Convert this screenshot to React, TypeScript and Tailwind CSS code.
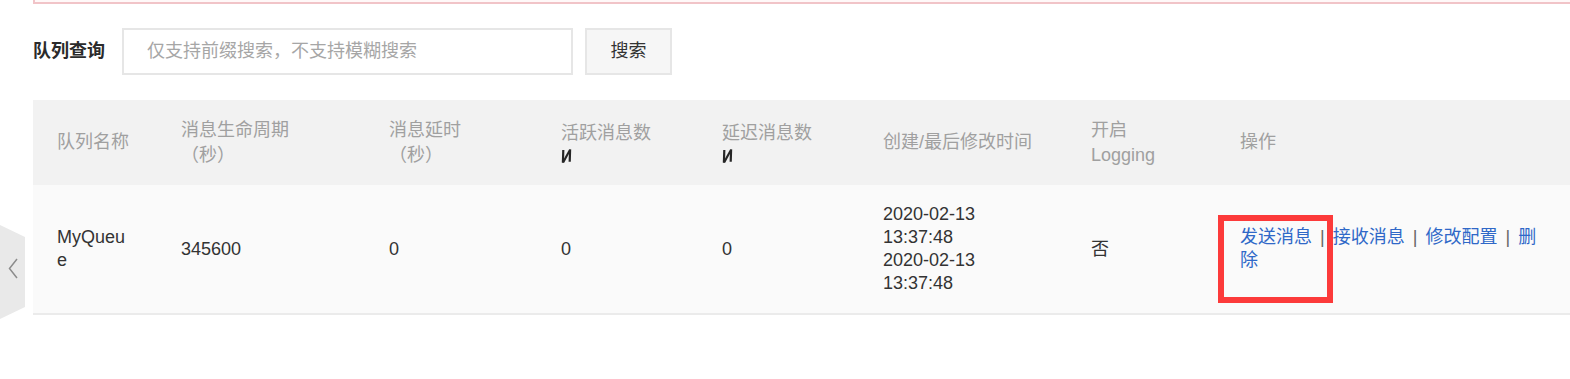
import React from "react";

const font = { fontFamily: '"Liberation Sans", "Noto Sans CJK SC", sans-serif' };

const cols = "grid grid-cols-[124px_208px_172px_161px_161px_208px_149px_1fr]";

function SortIcon() {
    return (
        <svg width="11" height="16" viewBox="0 0 11 16" className="mt-[2px]">
            <path d="M1.2 2 L3.4 2 L3 14.4 L0.8 14.4 Z" fill="#262626" />
            <path d="M0.8 14.4 L8 1.4 L10.2 1.8 L3.2 14.8 Z" fill="#262626" />
            <path d="M8 1.4 L10.2 1.4 L9.8 13.8 L7.6 13.8 Z" fill="#262626" />
        </svg>
    );
}

function HeaderCell({ children, className = "" }: { children: React.ReactNode; className?: string }) {
    return <div className={`pl-[24px] pr-[12px] text-[18px] leading-[25px] text-[#a0a0a0] ${className}`}>{children}</div>;
}

function Cell({ children, className = "" }: { children: React.ReactNode; className?: string }) {
    return <div className={`pl-[24px] text-[18px] leading-[23px] text-[#333] ${className}`}>{children}</div>;
}

function Link({ children }: { children: React.ReactNode }) {
    return <span className="text-[#2f68c8]">{children}</span>;
}

function Sep() {
    return <span className="mx-[3px] text-[#666]">|</span>;
}

export default function App() {
    return (
        <div className="relative w-[1570px] h-[379px] overflow-hidden bg-white" style={font}>
            {/* alert box edge, cut off at the top */}
            <div className="ml-[33px] h-[4px] border-l-2 border-b-2 border-[#f1c4c8] bg-[#fff8f8]" />

            {/* search */}
            <div className="mt-[24px] flex items-center pl-[33px]">
                <span className="w-[89px] text-[18px] font-bold text-[#2b2b2b]">队列查询</span>
                <div className="flex h-[47px] w-[451px] items-center border-2 border-[#e6e6e6] pl-[23px] text-[18px] text-[#a6a6a6]">
                    仅支持前缀搜索，不支持模糊搜索
                </div>
                <button className="ml-[12px] h-[47px] w-[87px] border-2 border-[#e6e6e6] bg-[#f6f6f6] text-[18px] text-[#333]">
                    搜索
                </button>
            </div>

            {/* table */}
            <div className="mt-[25px] ml-[33px]">
                <div className={`${cols} h-[85px] items-center bg-[#f2f2f2]`}>
                    <HeaderCell>队列名称</HeaderCell>
                    <HeaderCell>
                        <div>消息生命周期</div>
                        <div>（秒）</div>
                    </HeaderCell>
                    <HeaderCell>
                        <div>消息延时</div>
                        <div>（秒）</div>
                    </HeaderCell>
                    <HeaderCell>
                        <div>活跃消息数</div>
                        <SortIcon />
                    </HeaderCell>
                    <HeaderCell>
                        <div>延迟消息数</div>
                        <SortIcon />
                    </HeaderCell>
                    <HeaderCell>创建/最后修改时间</HeaderCell>
                    <HeaderCell>
                        <div>开启</div>
                        <div>Logging</div>
                    </HeaderCell>
                    <HeaderCell>操作</HeaderCell>
                </div>

                <div className={`${cols} items-center border-b-2 border-[#ebebeb] bg-[#fafafa] py-[18px]`}>
                    <Cell className="pr-[28px] break-all">MyQueue</Cell>
                    <Cell>345600</Cell>
                    <Cell>0</Cell>
                    <Cell>0</Cell>
                    <Cell>0</Cell>
                    <Cell>
                        <div>2020-02-13</div>
                        <div>13:37:48</div>
                        <div>2020-02-13</div>
                        <div>13:37:48</div>
                    </Cell>
                    <Cell>否</Cell>
                    <Cell className="pr-[30px]">
                        <Link>发送消息</Link> <Sep /> <Link>接收消息</Link> <Sep /> <Link>修改配置</Link> <Sep /> <Link>删除</Link>
                    </Cell>
                </div>
            </div>

            {/* side collapse tab */}
            <svg className="absolute left-0 top-[225px]" width="26" height="94" viewBox="0 0 26 94">
                <path d="M0 0 L25 12 L25 82 L0 94 Z" fill="#e9e9e9" />
                <polyline points="17,34 9.5,43.5 17,53" fill="none" stroke="#8c8c8c" strokeWidth="1.5" />
            </svg>

            {/* annotation */}
            <div className="absolute left-[1218px] top-[215px] h-[88px] w-[115px] border-[6px] border-[#fc3a3a]" />
        </div>
    );
}
